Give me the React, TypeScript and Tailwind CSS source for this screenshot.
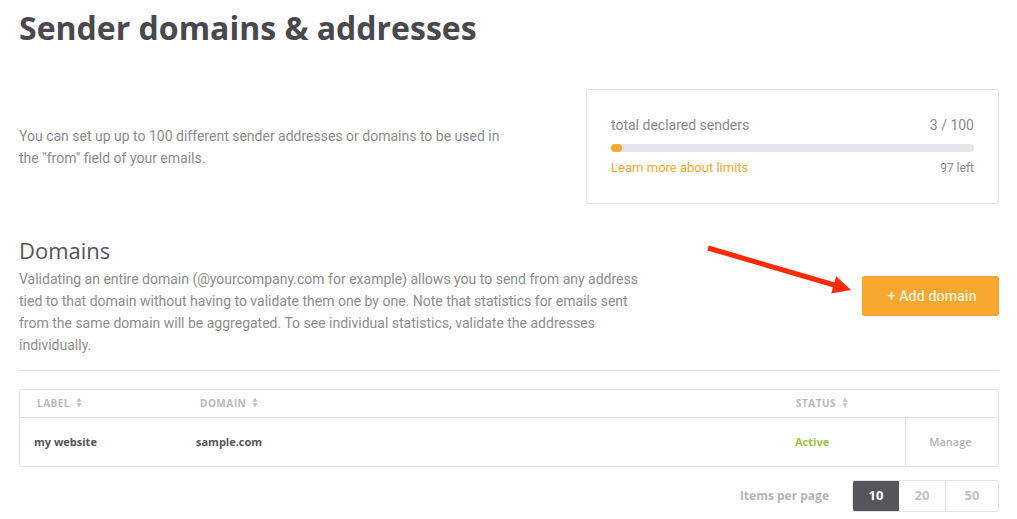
import React from "react";

const roboto = { fontFamily: "Roboto, 'Liberation Sans', sans-serif" };

function SortIcon() {
  return (
    <svg width="6" height="11" viewBox="0 0 6 11" className="ml-[6px] inline-block align-[-1px]">
      <path d="M3 0.5 L5.6 4.8 L0.4 4.8 Z" fill="#c4c4c4" />
      <path d="M3 10.5 L5.6 6.2 L0.4 6.2 Z" fill="#c4c4c4" />
    </svg>
  );
}

export default function App() {
  return (
    <div className="relative min-h-screen bg-white pl-[19px] pr-[18px] font-['Open_Sans',sans-serif]">
      {/* Title */}
      <h1 className="pt-[6px] text-[32px] font-bold leading-[44px] text-[#48484e]">
        Sender domains &amp; addresses
      </h1>

      {/* Intro + limits card */}
      <div className="mt-[39px] flex items-center justify-between">
        <p style={roboto} className="w-[500px] text-[14px] leading-[22px] text-[#8d8d8d]">
          You can set up up to 100 different sender addresses or domains to be used in the "from" field of your emails.
        </p>
        <div
          style={roboto}
          className="w-[413px] rounded-[3px] border border-[#e2e2e2] px-6 pt-[25px] pb-[26px]"
        >
          <div className="flex justify-between text-[14px] leading-[20px] text-[#8a8a8a]">
            <span>total declared senders</span>
            <span>3 / 100</span>
          </div>
          <div className="mt-[9px] h-2 w-full rounded-full bg-[#e4e4ea]">
            <div className="h-2 w-[3%] rounded-full bg-[#f9a82f]" />
          </div>
          <div className="mt-[7px] flex justify-between leading-[18px]">
            <span className="text-[13px] text-[#f9a82f]">Learn more about limits</span>
            <span className="text-[12px] text-[#8a8a8a]">97 left</span>
          </div>
        </div>
      </div>

      {/* Domains */}
      <div className="mt-8 flex items-center justify-between">
        <div className="w-[640px]">
          <h2 className="text-[22px] leading-[28px] text-[#555559]">Domains</h2>
          <p style={roboto} className="mt-[4px] text-[14px] leading-[22px] text-[#8d8d8d]">
            Validating an entire domain (@yourcompany.com for example) allows you to send from any address tied to that
            domain without having to validate them one by one. Note that statistics for emails sent from the same domain
            will be aggregated. To see individual statistics, validate the addresses individually.
          </p>
        </div>
        <button
          style={roboto}
          className="h-10 w-[137px] rounded-[2px] bg-[#f9a82f] pl-[3px] text-[14px] tracking-[0.2px] text-white"
        >
          + Add domain
        </button>
      </div>

      <div className="mt-[14px] border-t border-[#e2e2e2]" />

      {/* Table */}
      <div className="mt-[18px] rounded-[3px] border border-[#e2e2e2]">
        <div className="flex h-[28px] items-center border-b border-[#e2e2e2] text-[10px] font-bold tracking-[0.5px] text-[#b9b9bc]">
          <div className="w-[160px] pl-[17px]">
            LABEL
            <SortIcon />
          </div>
          <div className="w-[600px] pl-[20px]">
            DOMAIN
            <SortIcon />
          </div>
          <div className="w-[125px] pl-[16px]">
            STATUS
            <SortIcon />
          </div>
          <div className="flex-1" />
        </div>
        <div className="flex h-[48px] items-stretch text-[11px] font-bold">
          <div className="flex w-[160px] items-center pl-[14px] text-[#545458]">my website</div>
          <div className="flex w-[600px] items-center pl-[16px] text-[#545458]">sample.com</div>
          <div className="flex w-[125px] items-center pl-[15px] text-[#9cc33c]">Active</div>
          <div className="flex flex-1 items-center justify-center border-l border-[#e2e2e2] pr-[3px] font-semibold text-[#b3b3b6]">
            Manage
          </div>
        </div>
      </div>

      {/* Pagination */}
      <div className="mt-[13px] flex items-center justify-end">
        <span className="mr-[23px] text-[12px] font-bold text-[#b5b5b8]">Items per page</span>
        <div className="flex h-8 overflow-hidden rounded-[3px] border border-[#e2e2e2] text-[13px] font-bold">
          <div className="flex w-[46px] items-center justify-center bg-[#55555b] text-white">10</div>
          <div className="flex w-[47px] items-center justify-center border-r border-[#e2e2e2] text-[#c0c0c3]">20</div>
          <div className="flex w-[52px] items-center justify-center text-[#c0c0c3]">50</div>
        </div>
      </div>

      {/* Annotation arrow */}
      <svg
        className="absolute left-[700px] top-[236px]"
        width="160"
        height="64"
        viewBox="0 0 160 64"
      >
        <line x1="8" y1="12" x2="136" y2="49.5" stroke="#ff2a00" strokeWidth="5" />
        <polygon points="151,54 136.2,40.3 131.2,57.5" fill="#ff2a00" />
      </svg>
    </div>
  );
}
